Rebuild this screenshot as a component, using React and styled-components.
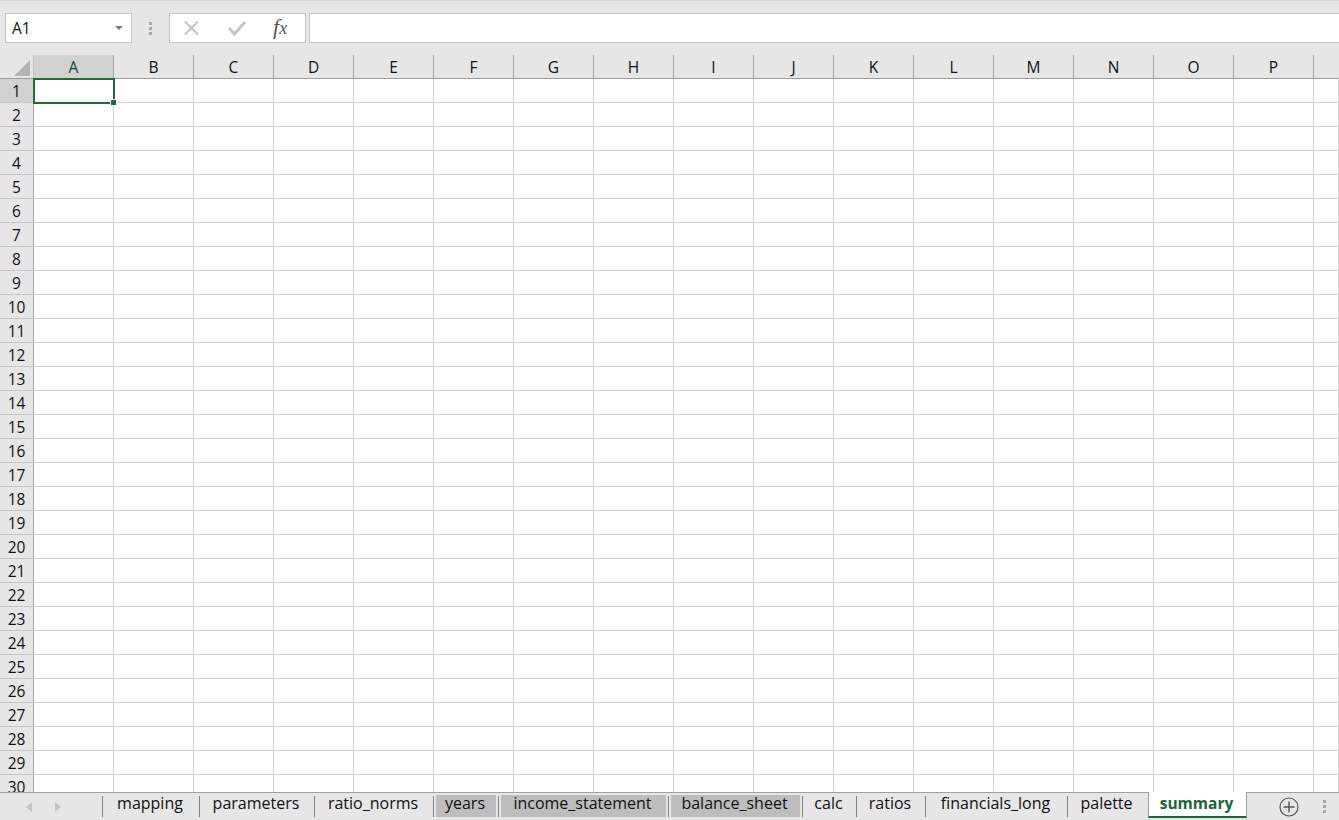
import React from 'react';
import styled, { createGlobalStyle } from 'styled-components';

const Global = createGlobalStyle`
  html, body { margin: 0; padding: 0; height: 100%; overflow: hidden; background: #e6e6e6; }
  #root { height: 100%; }
`;
const FONT = `"Open Sans", "Noto Sans", "Liberation Sans", sans-serif`;

const Page = styled.div`
  width: 1339px; height: 820px; display: flex; flex-direction: column; overflow: hidden;
  background: #e6e6e6; font-family: ${FONT}; color: #111;
`;
const FormulaBar = styled.div`
  height: 55px; box-sizing: border-box; flex: none; display: flex; align-items: flex-start;
  padding: 13px 0 0 5px; border-top: 1px solid #d4d4d4;
`;
const NameBox = styled.div`
  width: 127px; height: 30px; box-sizing: border-box; margin-top: -1px; background: #fff; border: 1px solid #c6c6c6;
  display: flex; align-items: center; justify-content: space-between; padding: 0 8px 0 6px;
  font-size: 15.5px; letter-spacing: -0.1px;
`;
const Caret = styled.span`
  width: 0; height: 0; border-left: 4px solid transparent; border-right: 4px solid transparent;
  border-top: 4px solid #7f7f7f;
`;
const Grip = styled.div`
  width: 37px; height: 30px; margin-top: -1px; display: flex; flex-direction: column; align-items: center; justify-content: center; gap: 2px;
`;
const TabGrip = styled(Grip)`
  width: 3px; height: 14px; margin: 0;
`;
const GripDot = styled.span`width: 3px; height: 3px; background: #a8a8a8;`;
const ActionBox = styled.div`
  width: 137px; height: 30px; margin-top: -1px; box-sizing: border-box; background: #fff; border: 1px solid #c6c6c6;
  display: flex; align-items: center; padding: 0 0 0 13px; flex: none;
`;
const ConfirmIcon = styled.svg`margin-left: 26px;`;
const FxText = styled.span`
  font-family: "Liberation Serif", serif; font-style: italic; font-size: 22px; color: #555; margin-left: 26px; line-height: 1;
  padding-bottom: 3px;
  span { font-size: 18px; }
`;
const FormulaInput = styled.div`
  flex: 1; height: 30px; margin: -1px 0 0 3px; box-sizing: border-box; background: #fff;
  border: 1px solid #c6c6c6; border-right: none;
`;
const Sheet = styled.div`
  flex: none; height: 737px; display: grid; overflow: hidden; background: #fff;
  grid-template-columns: 34px repeat(16, 80px) 1fr;
  grid-template-rows: 24px repeat(30, 24px);
`;
const Corner = styled.div`
  background: #e6e6e6; border-bottom: 1px solid #9d9d9d; box-sizing: border-box;
  border-right: 1px solid #c0c0c0;
  display: flex; align-items: flex-end; justify-content: flex-end; padding: 0 3px 2px 0;
`;
const ColHead = styled.div`
  box-sizing: border-box; background: ${p => p.$active ? '#d2d2d2' : '#e6e6e6'};
  border-bottom: 1px solid #9d9d9d; border-right: 1px solid ${p => p.$last ? 'transparent' : '#a6a6a6'};
  display: flex; align-items: center; justify-content: center;
  font-size: 15.5px; padding-top: 1px; color: ${p => p.$active ? '#0f4a2c' : '#111'};
`;
const RowHead = styled.div`
  box-sizing: border-box; background: ${p => p.$active ? '#d2d2d2' : '#e6e6e6'};
  border-right: 1px solid #a6a6a6; border-bottom: 1px solid #c6c6c6;
  display: flex; align-items: center; justify-content: center;
  font-size: 15.5px; color: #111;
`;
const Cell = styled.div`
  box-sizing: border-box; border-right: 1px solid #d4d4d4; border-bottom: 1px solid #d4d4d4; position: relative;
`;
const Selection = styled.div`
  position: absolute; left: -1px; top: -1px; right: -2px; bottom: -2px;
  border: 2px solid #1e6b3c; z-index: 2;
  &::after {
    content: ''; position: absolute; right: -4px; bottom: -4px; width: 5px; height: 5px;
    background: #1e6b3c; border: 1px solid #fff;
  }
`;
const TabBar = styled.div`
  flex: 1; box-sizing: border-box; border-top: 1px solid #a0a0a0; display: flex; align-items: flex-start; background: #e6e6e6;
`;
const Nav = styled.div`
  width: 102px; flex: none; height: 27px; display: flex; align-items: center; padding-left: 25px; box-sizing: border-box; gap: 21px;
`;
const TabList = styled.div`
  display: flex; align-items: stretch; border-left: 1px solid #808080; margin-top: 3px; height: 21px;
`;
const Tab = styled.div`
  width: ${p => p.$w}px; box-sizing: border-box; display: flex; align-items: center; justify-content: center;
  font-size: 16px; color: #111; position: relative; white-space: nowrap;
  padding: 0 3px 7px 0;
  &::before {
    content: ''; position: absolute; z-index: 0;
    left: 2px; right: 3px; top: -1px; bottom: 0; background: ${p => p.$tint || 'transparent'};
  }
  &::after {
    content: ''; position: absolute; right: 0; top: 0; bottom: 0; width: 1px; background: ${p => p.$noSep ? 'transparent' : '#808080'};
  }
  span { position: relative; z-index: 1; }
`;
const ActiveTab = styled.div`
  width: 99px; box-sizing: border-box; height: 26px; margin-top: -4px; background: #fff; color: #19663a;
  border-left: 1px solid #a0a0a0; border-right: 1px solid #a0a0a0; border-bottom: 2px solid #19663a;
  display: flex; align-items: center; justify-content: center; padding: 0 2px 3px 0;
  font-weight: 700; font-size: 15.5px;
`;
const TabTools = styled.div`
  flex: 1; height: 27px; display: flex; align-items: center; justify-content: flex-end; padding-right: 13px; gap: 24px;
`;

const COLS = 'ABCDEFGHIJKLMNOP'.split('');
const ROWS = Array.from({ length: 30 }, (_, i) => i + 1);
const TABS = [
  { n: 'mapping', w: 97 }, { n: 'parameters', w: 115 }, { n: 'ratio_norms', w: 119 },
  { n: 'years', w: 65, t: '#bdbdbd' }, { n: 'income_statement', w: 170, t: '#bdbdbd' }, { n: 'balance_sheet', w: 134, t: '#bdbdbd' },
  { n: 'calc', w: 54 }, { n: 'ratios', w: 69 }, { n: 'financials_long', w: 142 }, { n: 'palette', w: 80, noSep: true },
];

export default function App() {
  return (
    <Page>
      <Global />
      <FormulaBar>
        <NameBox>A1<Caret /></NameBox>
        <Grip><GripDot /><GripDot /><GripDot /></Grip>
        <ActionBox>
          <svg width="18" height="16" viewBox="0 0 18 16"><path d="M2 1.5 L15 14.5 M15 1.5 L2 14.5" stroke="#c4c4c4" strokeWidth="2" fill="none" /></svg>
          <ConfirmIcon width="20" height="16" viewBox="0 0 20 16"><path d="M2 8 L7.5 14 L18 2" stroke="#c4c4c4" strokeWidth="3" fill="none" /></ConfirmIcon>
          <FxText>f<span>x</span></FxText>
        </ActionBox>
        <FormulaInput />
      </FormulaBar>
      <Sheet>
        <Corner>
          <svg width="16" height="16" viewBox="0 0 16 16"><path d="M16 0 V16 H0 Z" fill="#b4b4b4" /></svg>
        </Corner>
        {COLS.map(c => <ColHead key={c} $active={c === 'A'}>{c}</ColHead>)}
        <ColHead $last />
        {ROWS.map(r => (
          <React.Fragment key={r}>
            <RowHead $active={r === 1}>{r}</RowHead>
            {COLS.map(c => (
              <Cell key={c}>{r === 1 && c === 'A' && <Selection />}</Cell>
            ))}
            <Cell />
          </React.Fragment>
        ))}
      </Sheet>
      <TabBar>
        <Nav>
          <svg width="8" height="10" viewBox="0 0 8 10"><path d="M7 0 V10 L1 5 Z" fill="#c4c4c4" /></svg>
          <svg width="8" height="10" viewBox="0 0 8 10"><path d="M1 0 V10 L7 5 Z" fill="#c4c4c4" /></svg>
        </Nav>
        <TabList>
          {TABS.map(t => <Tab key={t.n} $w={t.w} $tint={t.t} $noSep={t.noSep}><span>{t.n}</span></Tab>)}
          <ActiveTab>summary</ActiveTab>
        </TabList>
        <TabTools>
          <svg width="20" height="20" viewBox="0 0 20 20"><circle cx="10" cy="10" r="9" fill="none" stroke="#555" strokeWidth="1.2" /><path d="M10 4.5 V15.5 M4.5 10 H15.5" stroke="#555" strokeWidth="1.4" /></svg>
          <TabGrip><GripDot /><GripDot /><GripDot /></TabGrip>
        </TabTools>
      </TabBar>
    </Page>
  );
}
